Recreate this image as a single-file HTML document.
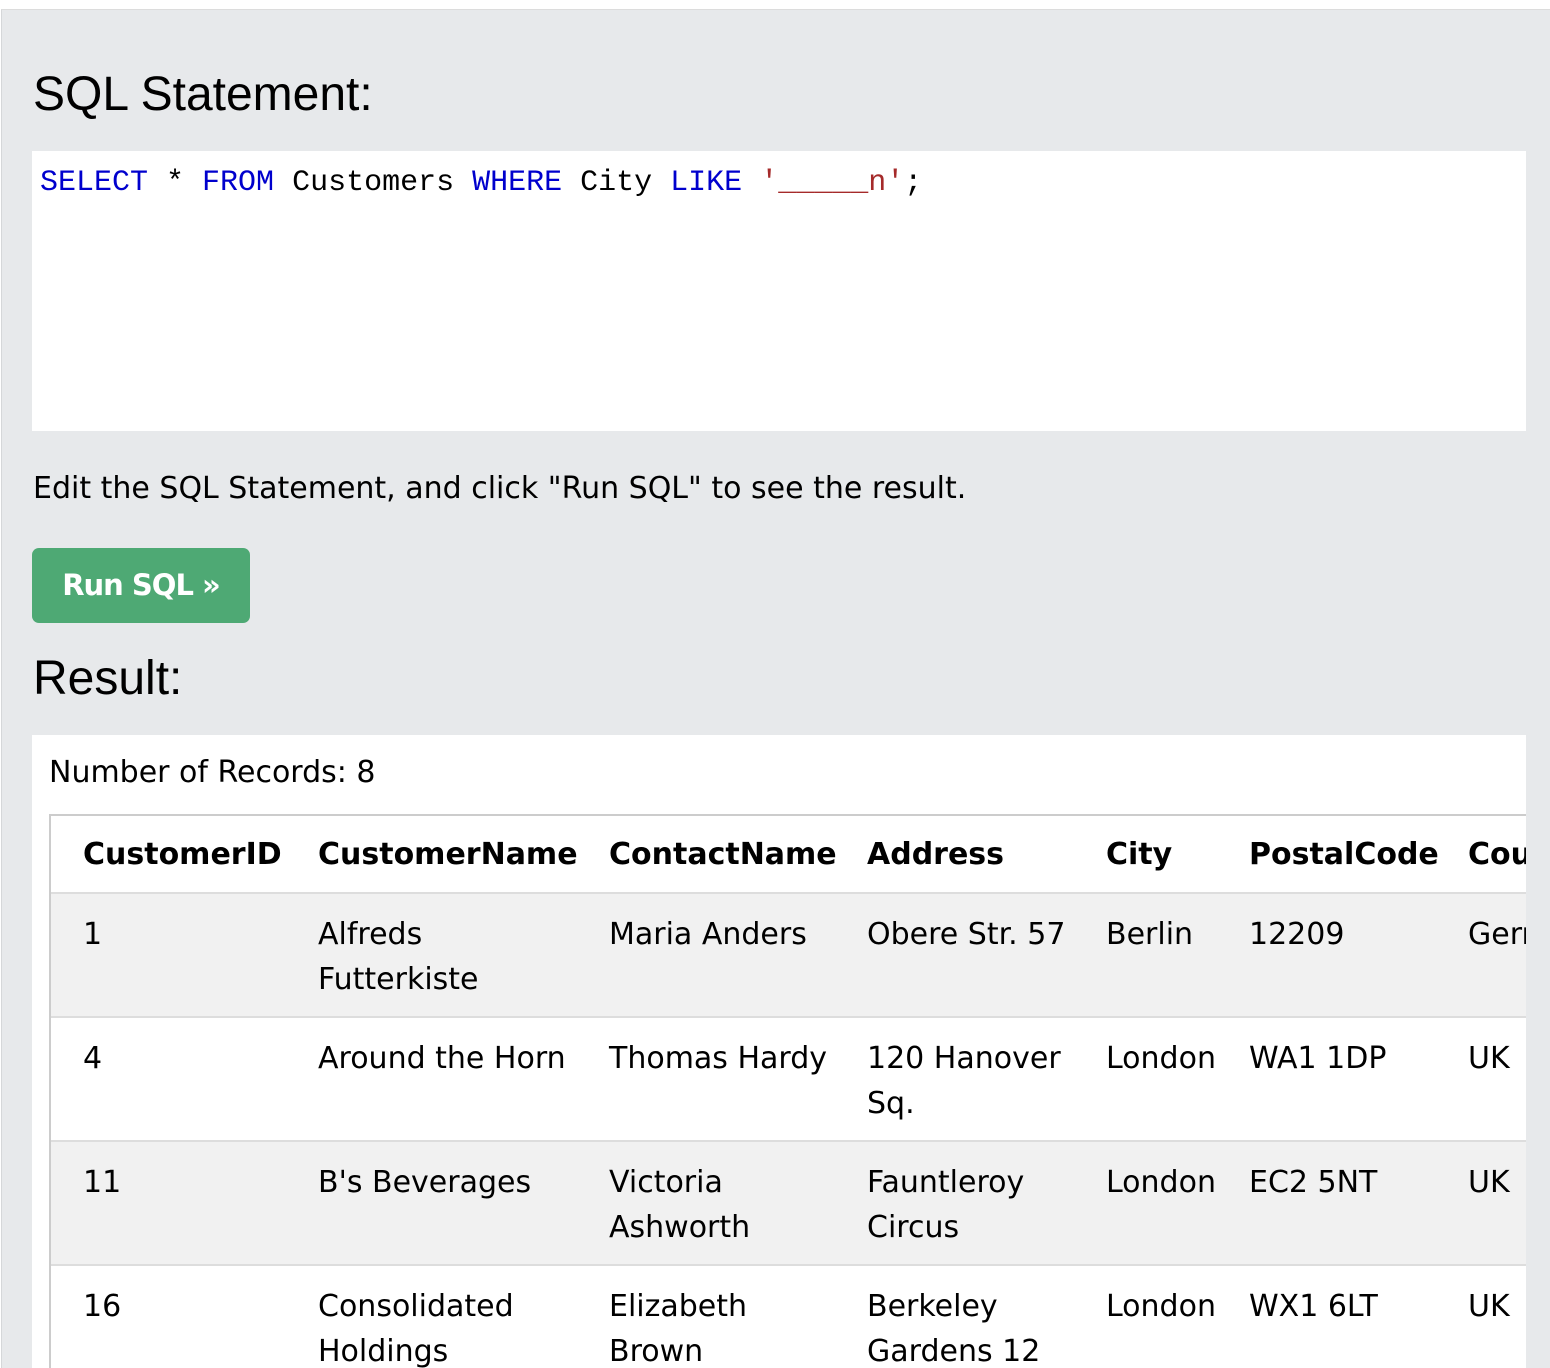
<!DOCTYPE html>
<html><head><meta charset="utf-8"><style>
html,body{margin:0;width:1550px;height:1368px;overflow:hidden;}
body{position:relative;background:#fff;font-family:"DejaVu Sans",Verdana,sans-serif;}
.panel{position:absolute;left:1px;top:9px;width:1549px;height:1359px;background:#e7e9eb;border-left:1px solid #d5d7d9;border-top:1px solid #dcdcdc;box-sizing:border-box;}
.a{position:absolute;white-space:nowrap;}
h2{position:absolute;margin:0;font-family:"Liberation Sans",Arial,sans-serif;font-weight:normal;font-size:48px;color:#000;}
.code{position:absolute;left:32px;top:151px;width:1494px;height:280px;background:#fff;}
.code pre{margin:0;position:absolute;left:8px;top:15px;font-family:"Liberation Mono","DejaVu Sans Mono",monospace;font-size:30px;color:#000;}
.k{color:#0000cd}.s{color:#a52a2a}
.btn{position:absolute;left:32px;top:548px;width:218px;height:75px;background:#4ea974;border-radius:7px;color:#fff;font-family:"DejaVu Sans",sans-serif;font-weight:bold;font-size:29px;line-height:75px;text-align:center;letter-spacing:-1px;}
.res{position:absolute;left:32px;top:735px;width:1494px;height:633px;background:#fff;overflow:hidden;}
.tbl{position:absolute;left:17px;top:79px;width:1500px;height:700px;border-left:2px solid #ccc;border-top:2px solid #ccc;}
.row{position:absolute;left:0;width:1500px;height:122px;border-bottom:2px solid #ddd;}
.row.g{background:#f1f1f1}
.c{position:absolute;font-size:30px;line-height:45px;color:#000;white-space:nowrap;}
.h{font-weight:bold;}
</style></head><body>
<div class="panel"></div>
<h2 style="left:33px;top:67px;">SQL Statement:</h2>
<div class="code"><pre><span class="k">SELECT</span> * <span class="k">FROM</span> Customers <span class="k">WHERE</span> City <span class="k">LIKE</span> <span class="s">'_____n'</span>;</pre></div>
<div class="a" style="left:33px;top:471px;font-size:30px;">Edit the SQL Statement, and click "Run SQL" to see the result.</div>
<div class="btn">Run SQL »</div>
<h2 style="left:33px;top:651px;">Result:</h2>
<div class="res">
<div class="a" style="left:17px;top:15px;font-size:30px;line-height:45px;">Number of Records: 8</div>
<div class="tbl">
<div class="row" style="top:0;height:76px;background:#fff;">
<div class="c h" style="left:32px;top:16px">CustomerID</div><div class="c h" style="left:267px;top:16px">CustomerName</div><div class="c h" style="left:558px;top:16px">ContactName</div><div class="c h" style="left:816px;top:16px">Address</div><div class="c h" style="left:1055px;top:16px">City</div><div class="c h" style="left:1198px;top:16px">PostalCode</div><div class="c h" style="left:1417px;top:16px">Country</div></div>
<div class="row g" style="top:78px">
<div class="c" style="left:32px;top:18px">1</div><div class="c" style="left:267px;top:18px">Alfreds<br>Futterkiste</div><div class="c" style="left:558px;top:18px">Maria Anders</div><div class="c" style="left:816px;top:18px">Obere Str. 57</div><div class="c" style="left:1055px;top:18px">Berlin</div><div class="c" style="left:1198px;top:18px">12209</div><div class="c" style="left:1417px;top:18px">Germany</div></div>
<div class="row" style="top:202px">
<div class="c" style="left:32px;top:18px">4</div><div class="c" style="left:267px;top:18px">Around the Horn</div><div class="c" style="left:558px;top:18px">Thomas Hardy</div><div class="c" style="left:816px;top:18px">120 Hanover<br>Sq.</div><div class="c" style="left:1055px;top:18px">London</div><div class="c" style="left:1198px;top:18px">WA1 1DP</div><div class="c" style="left:1417px;top:18px">UK</div></div>
<div class="row g" style="top:326px">
<div class="c" style="left:32px;top:18px">11</div><div class="c" style="left:267px;top:18px">B's Beverages</div><div class="c" style="left:558px;top:18px">Victoria<br>Ashworth</div><div class="c" style="left:816px;top:18px">Fauntleroy<br>Circus</div><div class="c" style="left:1055px;top:18px">London</div><div class="c" style="left:1198px;top:18px">EC2 5NT</div><div class="c" style="left:1417px;top:18px">UK</div></div>
<div class="row" style="top:450px">
<div class="c" style="left:32px;top:18px">16</div><div class="c" style="left:267px;top:18px">Consolidated<br>Holdings</div><div class="c" style="left:558px;top:18px">Elizabeth<br>Brown</div><div class="c" style="left:816px;top:18px">Berkeley<br>Gardens 12</div><div class="c" style="left:1055px;top:18px">London</div><div class="c" style="left:1198px;top:18px">WX1 6LT</div><div class="c" style="left:1417px;top:18px">UK</div></div>
</div></div>
</body></html>
